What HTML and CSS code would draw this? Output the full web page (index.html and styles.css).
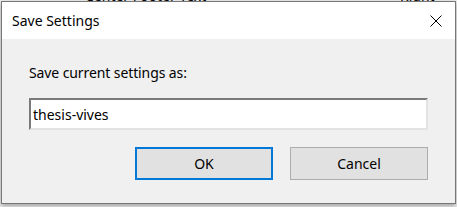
FILE: index.html
```html
<!DOCTYPE html>
<html>
<head>
<meta charset="utf-8">
<link rel="stylesheet" href="styles.css">
</head>
<body>
<div class="desktop">
  <div class="backdrop">
    <span class="bg-text bg-center">Center Footer Text</span>
    <span class="bg-text bg-right">Right Footer Text</span>
  </div>
  <div class="window">
    <div class="titlebar">
      <span class="title">Save Settings</span>
      <span class="close" aria-label="Close">
        <svg width="12" height="12" viewBox="0 0 12 12"><path d="M0.5 0.5 L11.5 11.5 M11.5 0.5 L0.5 11.5" stroke="#000" stroke-width="1" fill="none"/></svg>
      </span>
    </div>
    <div class="content">
      <label class="label" for="name">Save current settings as:</label>
      <div class="field"><span class="value">thesis-vives</span></div>
      <div class="buttons">
        <button class="btn btn-default">OK</button>
        <button class="btn">Cancel</button>
      </div>
    </div>
  </div>
</div>
</body>
</html>
```
FILE: styles.css
```css
html, body {
  margin: 0;
  padding: 0;
}
body {
  width: 457px;
  height: 207px;
  overflow: hidden;
  background: #f0f0f0;
  font-family: "Noto Sans", "Open Sans", sans-serif;
}
.desktop {
  position: relative;
  width: 457px;
  height: 207px;
  overflow: hidden;
}
.backdrop {
  position: relative;
  height: 207px;
  background: #f0f0f0;
}
.bg-text {
  position: absolute;
  top: -11px;
  font-size: 14px;
  line-height: 14px;
  color: #000;
}
.bg-center { left: 85px; }
.bg-right { left: 400px; }
.window {
  position: absolute;
  left: 1px;
  top: 1px;
  width: 455px;
  height: 203px;
  box-sizing: border-box;
  border: 1px solid #777777;
  background: #f0f0f0;
  box-shadow: 0 2px 5px rgba(0, 0, 0, 0.35);
  display: flex;
  flex-direction: column;
}
.titlebar {
  height: 37px;
  background: #ffffff;
  display: flex;
  align-items: center;
  justify-content: space-between;
  padding: 0 13px 0 10px;
  flex-shrink: 0;
}
.title {
  font-size: 14px;
  color: #000;
}
.close {
  width: 12px;
  height: 12px;
  display: flex;
  margin-top: 1px;
}
.content {
  padding: 24px 27px 0 27px;
  display: flex;
  flex-direction: column;
}
.label {
  font-size: 14px;
  line-height: 20px;
  letter-spacing: -0.1px;
  color: #000;
  height: 20px;
}
.field {
  margin-top: 15px;
  height: 32px;
  box-sizing: border-box;
  background: #fff;
  border-top: 2px solid #7a7a7a;
  border-left: 2px solid #7a7a7a;
  border-right: 2px solid #e3e3e3;
  border-bottom: 2px solid #e3e3e3;
  padding-left: 2px;
  display: flex;
  align-items: center;
}
.value {
  font-size: 14px;
  color: #000;
}
.buttons {
  margin-top: 17px;
  display: flex;
  justify-content: flex-end;
  gap: 17px;
}
.btn {
  width: 138px;
  height: 33px;
  box-sizing: border-box;
  background: #e1e1e1;
  border: 1px solid #adadad;
  font-family: inherit;
  font-size: 14px;
  color: #000;
  padding: 0;
  margin: 0;
}
.btn-default {
  border: 2px solid #0078d7;
}
```
